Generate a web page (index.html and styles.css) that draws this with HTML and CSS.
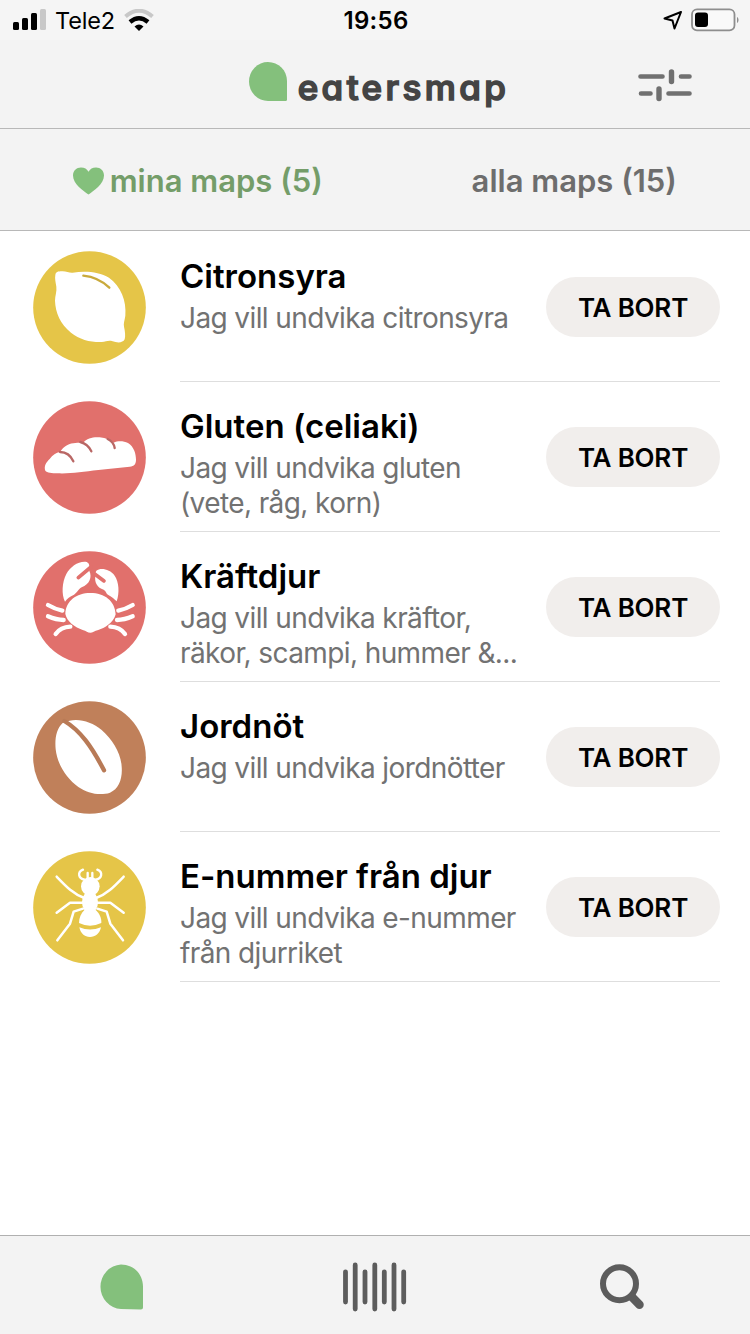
FILE: index.html
```html
<!DOCTYPE html>
<html lang="sv">
<head>
  <meta charset="UTF-8">
  <title>eatersmap</title>
  <link rel="stylesheet" href="styles.css">
</head>
<body>
  <div class="screen">
    <div class="status-bar">
      <div class="status-left">
        <svg class="signal" viewBox="0 0 33 22" width="33" height="22">
          <rect x="0" y="13" width="6" height="8" rx="1.5"/>
          <rect x="9" y="9" width="6" height="12" rx="1.5"/>
          <rect x="18" y="4" width="6" height="17" rx="1.5"/>
          <rect x="27" y="0" width="6" height="21" rx="1.5" fill="#c8c8c8"/>
        </svg>
        <span class="carrier">Tele2</span>
        <svg class="wifi" viewBox="0 0 30 22" width="30" height="22">
          <path d="M1.5 7.5Q15 -4 28.5 7.5" fill="none" stroke="#c8c8c8" stroke-width="4"/>
          <path d="M6 13Q15 5.500 24 13" fill="none" stroke="#000" stroke-width="4.4"/>
          <path d="M15 22L10.500 17.4Q15 13.5 19.5 17.4Z"/>
        </svg>
      </div>
      <div class="clock">19:56</div>
      <div class="status-right">
        <svg viewBox="0 0 20 20" width="20" height="20">
          <path d="M18 2L1.5 8.5L9.5 10.5L11.5 18.5Z" fill="none" stroke="#000" stroke-width="2" stroke-linejoin="round"/>
        </svg>
        <svg viewBox="0 0 48 24" width="48" height="24">
          <rect x="1" y="1.3" width="42.5" height="21" rx="5" fill="#f9f9f9" stroke="#8e8e8e" stroke-width="1.8"/>
          <rect x="4" y="4.5" width="13" height="14.5" rx="3"/>
          <path d="M46 9V15C48 14 48 10 46 9Z" fill="#8e8e8e"/>
        </svg>
      </div>
    </div>

    <header class="header">
      <div class="logo">
        <svg viewBox="0 0 38 39" width="38" height="39">
          <path d="M19 0C29.5 0 38 8.5 38 19V37.5Q38 39 36.5 39H19A19 19.5 0 0 1 19 0Z" fill="#84c07c"/>
        </svg>
        <span class="logo-text">eatersmap</span>
      </div>
      <svg class="filter" viewBox="0 0 54 34" width="54" height="34">
        <path d="M2.5 8.5H24.5M43 8.5H51.5M3 25.5H12.5M30.5 25.5H51.5" stroke-width="4.6"/>
        <path d="M33.5 4V13.5M21 21V30.5" stroke-width="5.4"/>
      </svg>
    </header>

    <nav class="tabs">
      <div class="tab active">
        <svg viewBox="0 0 31 28" width="31" height="28">
          <path d="M15.5 27.5C10 23.5 0 17 0 8.5C0 3.5 3.5 .5 8 .5C11.5 .5 14 2 15.5 4.7C17 2 19.5 .5 23 .5C27.5 .5 31 3.5 31 8.5C31 17 21 23.5 15.5 27.5Z" fill="#84c07c"/>
        </svg>
        <span>mina maps (5)</span>
      </div>
      <div class="tab"><span>alla maps (15)</span></div>
    </nav>

    <main class="list">
      <div class="item">
        <svg class="item-icon yellow" viewBox="38 32 339 339">
          <ellipse cx="207.5" cy="201.5" rx="169" ry="169"/>
          <path class="shape" d="M105 104C106 95 113 93 124 93C137 92 146 98 157 97C195 91 236 94 266 112C302 138 319 181 315 226C313 240 309 248 311 259C314 272 316 287 313 297C308 308 291 308 277 303C264 299 258 304 244 305C211 306 178 298 152 277C120 251 105 216 104 181C104 166 110 154 108 139C106 126 103 115 105 104Z"/>
          <path class="line" d="M189 106C218 109 243 119 267 142" stroke-width="7"/>
        </svg>
        <div class="item-body">
          <div class="item-text">
            <h2>Citronsyra</h2>
            <p>Jag vill undvika citronsyra</p>
          </div>
          <button type="button">TA BORT</button>
        </div>
      </div>

      <div class="item">
        <svg class="item-icon red" viewBox="38 32 339 339">
          <ellipse cx="207.5" cy="201.5" rx="169" ry="169"/>
          <path class="shape" d="M75 241C70 229 77 216 88 206C97 194 107 187 119 185C130 167 149 158 165 158C174 157 181 158 188 157C200 143 221 139 238 141C257 143 271 149 280 157C292 151 309 151 323 158C341 169 347 191 347 208C347 221 342 227 328 229L234 239C187 244 149 251 111 249C95 249 80 247 75 241Z"/>
          <path class="line" d="M119 185C138 185 151 195 159 213M180 155C196 159 206 168 213 183M262 146C275 152 281 161 283 173" stroke-width="7"/>
        </svg>
        <div class="item-body">
          <div class="item-text">
            <h2>Gluten (celiaki)</h2>
            <p>Jag vill undvika gluten<br>(vete, råg, korn)</p>
          </div>
          <button type="button">TA BORT</button>
        </div>
      </div>

      <div class="item">
        <svg class="item-icon red" viewBox="38 32 339 339">
          <ellipse cx="207.5" cy="201.5" rx="169" ry="169"/>
          <path class="shape" d="M135 221C137 181 168 158 210 158C253 158 284 182 286 222C280 247 252 264 234 269C222 272 217 277 210 277C202 277 198 272 187 269C164 261 140 245 135 221Z"/>
          <path class="shape" d="M134 184C123 162 125 126 138 101C150 79 176 61 199 65C204 67 207 72 207 77L207 92C216 110 208 132 184 141C173 147 171 157 161 163C148 169 141 174 134 184Z"/>
          <path class="shape" d="M289 183C298 158 296 125 283 106C269 87 242 81 228 91Q223 97 225 108C222 126 231 143 250 148C258 153 257 160 264 164C275 170 282 176 289 183Z"/>
          <path class="claw-gap" d="M212 80L174 112M218 97L251 122"/>
          <path class="leg" d="M126 211Q105 207 83 194M130 239Q108 239 83 228M150 259Q121 260 106 281M294 211Q315 207 337 194M290 239Q312 239 337 228M270 259Q299 260 314 281" stroke-width="13"/>
        </svg>
        <div class="item-body">
          <div class="item-text">
            <h2>Kräftdjur</h2>
            <p>Jag vill undvika kräftor,<br>räkor, scampi, hummer &amp;...</p>
          </div>
          <button type="button">TA BORT</button>
        </div>
      </div>

      <div class="item">
        <svg class="item-icon brown" viewBox="38 32 339 339">
          <ellipse cx="207.5" cy="201.5" rx="169" ry="169"/>
          <path class="shape" d="M127 98C108 115 103 145 106 177C111 223 139 264 174 290C202 309 238 317 269 307C296 296 307 264 304 229C302 188 276 147 244 119C216 96 180 84 148 91Z"/>
          <path class="line" d="M132 92C181 121 215 171 251 240" stroke-width="13"/>
        </svg>
        <div class="item-body">
          <div class="item-text">
            <h2>Jordnöt</h2>
            <p>Jag vill undvika jordnötter</p>
          </div>
          <button type="button">TA BORT</button>
        </div>
      </div>

      <div class="item">
        <svg class="item-icon yellow" viewBox="38 32 339 339">
          <ellipse cx="207.5" cy="201.5" rx="169" ry="169"/>
          <circle class="shape" cx="210" cy="138" r="28"/>
          <ellipse class="shape" cx="209" cy="186" rx="24" ry="33"/>
          <path class="shape" d="M193 208H225C237 218 244 232 243 248Q209 264 176 248C176 232 182 218 193 208Z"/>
          <path class="shape" d="M177 261Q209 274 242 261C238 280 225 290 209 290C193 290 181 280 177 261Z"/>
          <path class="leg" d="M188 88C170 96 174 114 193 118M231 88C249 96 245 114 226 118M202 112V98M216 112V98" stroke-width="7"/>
          <path class="leg" d="M192 173C159 161 138 139 109 109M227 173C260 161 281 139 310 109M188 187H149L109 217M231 187H270L310 217M188 205L160 214L149 250L111 300M231 205L259 214L270 250L308 300" stroke-width="7.5"/>
        </svg>
        <div class="item-body">
          <div class="item-text">
            <h2>E-nummer från djur</h2>
            <p>Jag vill undvika e-nummer<br>från djurriket</p>
          </div>
          <button type="button">TA BORT</button>
        </div>
      </div>
    </main>

    <footer class="bottom-nav">
      <svg viewBox="0 0 44 46" width="44" height="46">
        <path d="M22 .5C34.5 .5 44 10 44 22.5V43.5Q44 45.5 42 45.500L22 45A22 22.3 0 0 1 22 .5Z" fill="#84c07c"/>
      </svg>
      <svg viewBox="0 0 64 50" width="64" height="50">
        <path d="M2.5 10V40M12.2 3V47M22 10V40M31.8 3V47M41.3 10V40M51 3V47M60.7 10V40" stroke="#5c5c5c" stroke-width="4.8" stroke-linecap="round"/>
      </svg>
      <svg viewBox="0 0 46 46" width="46" height="46">
        <circle cx="20.5" cy="19.7" r="16.5" fill="none" stroke="#5c5c5c" stroke-width="6"/>
        <path d="M33 33L40.5 40.7" stroke="#5c5c5c" stroke-width="8.5" stroke-linecap="round"/>
      </svg>
    </footer>
  </div>
</body>
</html>
```

FILE: styles.css
```css
* {
  box-sizing: border-box;
}
body {
  margin: 0;
  background: #fff;
  font-family: Inter, "Liberation Sans", sans-serif;
  color: #000;
}
.screen {
  display: flex;
  flex-direction: column;
  width: 750px;
  height: 1334px;
}
svg {
  display: block;
  flex: none;
}
/* Phone status bar */
.status-bar {
  display: grid;
  grid-template-columns: 1fr auto 1fr;
  align-items: center;
  height: 40px;
  padding: 0 11px 0 13px;
  background: #f5f5f5;
}
.status-left {
  display: flex;
  align-items: center;
  gap: 9px;
}
.carrier {
  padding-top: 1px;
  font-size: 23.5px;
  letter-spacing: -0.2px;
}
.clock {
  padding-top: 1px;
  font-size: 24px;
  font-weight: 600;
  letter-spacing: 0.3px;
}
.status-right {
  display: flex;
  align-items: center;
  justify-content: flex-end;
  gap: 8px;
}
/* Header with logo */
.header {
  display: grid;
  grid-template-columns: 1fr auto 1fr;
  height: 89px;
  padding-right: 58px;
  padding-left: 66px;
  background: #f3f3f3;
  border-bottom: 1px solid #b8b8b8;
}
.logo {
  grid-column: 2;
  display: flex;
  gap: 11px;
  padding-top: 22px;
}
.logo-text {
  margin-top: 3px;
  font-size: 35px;
  line-height: 44px;
  font-weight: 500;
  letter-spacing: 3.4px;
  font-feature-settings: "cv11";
  color: #444;
  -webkit-text-stroke: 1.6px #444;
}
.filter {
  grid-column: 3;
  justify-self: end;
  margin-top: 28px;
  fill: none;
  stroke: #707070;
  stroke-linecap: round;
}
/* Tabs */
.tabs {
  display: flex;
  height: 102px;
  background: #f3f3f3;
  border-bottom: 1px solid #b8b8b8;
}
.tab {
  display: flex;
  align-items: center;
  justify-content: center;
  flex: 1;
  padding: 2px 0 0 22px;
  gap: 6px;
  font-size: 31px;
  font-weight: 600;
  color: #6d6d6d;
}
.tab:last-child {
  padding-left: 25px;
}
.tab.active {
  color: #749d69;
}
/* Allergy list */
.list {
  flex: 1;
  padding: 1px 30px 0 33px;
}
.item {
  display: flex;
  gap: 34px;
  height: 150px;
}
.item-icon {
  width: 113px;
  height: 113px;
  margin-top: 19px;
}
.yellow {
  fill: #e5c548;
  stroke: #c9aa3c;
}
.red {
  fill: #e1706c;
  stroke: #b96765;
}
.brown {
  fill: #c0805a;
  stroke: #b87a56;
}
.item-icon ellipse:first-child {
  stroke: none;
}
.item-icon .shape {
  fill: #fff;
  stroke: none;
}
.item-icon .line,
.item-icon .leg {
  fill: none;
  stroke-linecap: round;
  stroke-linejoin: round;
}
.item-icon .leg {
  stroke: #fff;
}
.claw-gap {
  fill: none;
  stroke: #e1706c;
  stroke-width: 11;
  stroke-linecap: round;
}
.item-body {
  display: flex;
  justify-content: space-between;
  flex: 1;
  border-bottom: 1px solid #dedede;
}
.item-text {
  padding-top: 22px;
  white-space: nowrap;
}
h2 {
  margin: 0;
  font-size: 33px;
  line-height: 44px;
  font-weight: 600;
}
p {
  margin: 3px 0 0;
  font-size: 28px;
  line-height: 35px;
  letter-spacing: -0.6px;
  color: #727272;
}
button {
  width: 174px;
  height: 60px;
  margin-top: 45px;
  padding: 0;
  background: #f1eeec;
  border: none;
  border-radius: 30px;
  font-family: inherit;
  font-size: 26px;
  font-weight: 600;
  letter-spacing: -0.2px;
  color: #000;
}
/* Bottom navigation */
.bottom-nav {
  display: grid;
  grid-template-columns: 244px 256px 1fr;
  align-items: center;
  height: 99px;
  padding: 3px 0 0 99px;
  background: #f3f3f3;
  border-top: 1px solid #b0b0b0;
}
```
